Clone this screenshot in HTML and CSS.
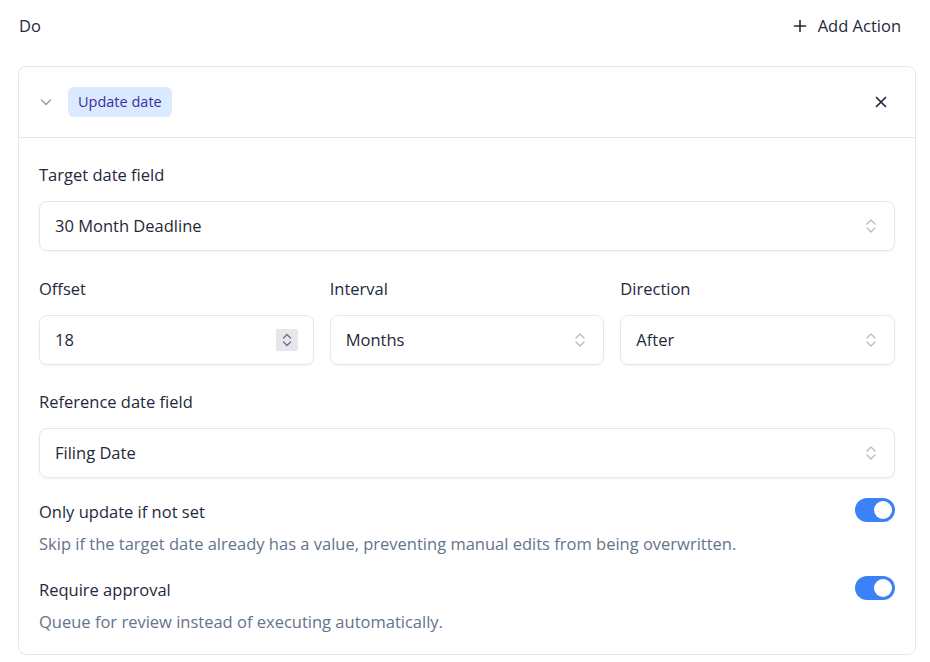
FILE: index.html
```html
<!DOCTYPE html>
<html lang="en">

<head>
    <meta charset="UTF-8">
    <meta name="viewport" content="width=device-width, initial-scale=1.0">
    <title>Actions</title>
    <link rel="stylesheet" href="styles.css">
</head>

<body>
    <div class="section-head">
        <span class="section-title">Do</span>
        <button class="add-btn">
            <svg width="16" height="16" viewBox="0 0 16 16" fill="none" stroke="#1f2937" stroke-width="1.6" stroke-linecap="round">
                <path d="M8 2.5v11M2.5 8h11" />
            </svg>
            Add Action
        </button>
    </div>

    <div class="action-card">
        <div class="card-head">
            <svg class="chevron" width="16" height="16" viewBox="0 0 16 16" fill="none" stroke="#94a3b8" stroke-width="1.6" stroke-linecap="round" stroke-linejoin="round">
                <path d="M3.5 6l4.5 4.5L12.5 6" />
            </svg>
            <span class="badge">Update date</span>
            <button class="close-btn">
                <svg width="16" height="16" viewBox="0 0 16 16" fill="none" stroke="#1e293b" stroke-width="1.7" stroke-linecap="round">
                    <path d="M3.5 3.5l9 9M12.5 3.5l-9 9" />
                </svg>
            </button>
        </div>

        <div class="card-body">
            <div class="field">
                <label>Target date field</label>
                <div class="select">
                    <span>30 Month Deadline</span>
                    <svg class="updown" width="16" height="20" viewBox="0 0 16 20" fill="none" stroke="#b6bcc6" stroke-width="1.3" stroke-linecap="round" stroke-linejoin="round">
                        <path d="M4 8l4-4 4 4M4 12l4 4 4-4" />
                    </svg>
                </div>
            </div>

            <div class="field-row">
                <div class="field">
                    <label>Offset</label>
                    <div class="select">
                        <span>18</span>
                        <span class="spinner">
                            <svg width="12" height="18" viewBox="0 0 12 18" fill="none" stroke="#6b7280" stroke-width="1.3" stroke-linecap="round" stroke-linejoin="round">
                                <path d="M2.5 7l3.5-3.5L9.5 7M2.5 11l3.5 3.5 3.5-3.5" />
                            </svg>
                        </span>
                    </div>
                </div>
                <div class="field">
                    <label>Interval</label>
                    <div class="select">
                        <span>Months</span>
                        <svg class="updown" width="16" height="20" viewBox="0 0 16 20" fill="none" stroke="#b6bcc6" stroke-width="1.3" stroke-linecap="round" stroke-linejoin="round">
                            <path d="M4 8l4-4 4 4M4 12l4 4 4-4" />
                        </svg>
                    </div>
                </div>
                <div class="field">
                    <label>Direction</label>
                    <div class="select">
                        <span>After</span>
                        <svg class="updown" width="16" height="20" viewBox="0 0 16 20" fill="none" stroke="#b6bcc6" stroke-width="1.3" stroke-linecap="round" stroke-linejoin="round">
                            <path d="M4 8l4-4 4 4M4 12l4 4 4-4" />
                        </svg>
                    </div>
                </div>
            </div>

            <div class="field">
                <label>Reference date field</label>
                <div class="select">
                    <span>Filing Date</span>
                    <svg class="updown" width="16" height="20" viewBox="0 0 16 20" fill="none" stroke="#b6bcc6" stroke-width="1.3" stroke-linecap="round" stroke-linejoin="round">
                        <path d="M4 8l4-4 4 4M4 12l4 4 4-4" />
                    </svg>
                </div>
            </div>

            <div class="option first">
                <div class="option-text">
                    <div class="option-title">Only update if not set</div>
                    <div class="option-desc">Skip if the target date already has a value, preventing manual edits from being overwritten.</div>
                </div>
                <span class="toggle on"></span>
            </div>

            <div class="option">
                <div class="option-text">
                    <div class="option-title">Require approval</div>
                    <div class="option-desc">Queue for review instead of executing automatically.</div>
                </div>
                <span class="toggle on"></span>
            </div>
        </div>
    </div>
</body>

</html>
```

FILE: styles.css
```css
* {
    margin: 0;
    padding: 0;
    box-sizing: border-box;
}

body {
    font-family: 'Open Sans', 'Noto Sans', sans-serif;
    font-size: 16.5px;
    line-height: 24px;
    color: #1e293b;
    background: #ffffff;
    padding: 14px 14px 0 18px;
}

button {
    font: inherit;
    color: inherit;
    background: none;
    border: none;
    cursor: pointer;
}

/* Section header */
.section-head {
    display: flex;
    justify-content: space-between;
    align-items: center;
    height: 24px;
    margin-bottom: 28px;
}

.section-title {
    padding-left: 1px;
}

.add-btn {
    display: flex;
    align-items: center;
    gap: 10px;
    padding-right: 15px;
}

/* Card */
.action-card {
    width: 898px;
    border: 1px solid #e2e8f0;
    border-radius: 8px;
}

.card-head {
    display: flex;
    align-items: center;
    height: 71px;
    padding: 0 26px 0 19px;
    border-bottom: 1px solid #e2e8f0;
}

.chevron {
    margin-right: 14px;
}

.badge {
    background: #dbeafe;
    color: #3730a3;
    font-size: 14.5px;
    line-height: 20px;
    padding: 5px 10px;
    border-radius: 6px;
}

.close-btn {
    margin-left: auto;
    display: flex;
}

.card-body {
    padding: 25px 20px 20px 20px;
}

.field {
    display: flex;
    flex-direction: column;
    gap: 14px;
    margin-bottom: 26px;
}

.field-row {
    display: grid;
    grid-template-columns: repeat(3, 1fr);
    gap: 16px;
}

.field-row .field {
    margin-bottom: 25px;
}

.field label {
    line-height: 24px;
}

.select {
    height: 50px;
    display: flex;
    align-items: center;
    justify-content: space-between;
    padding: 0 15px 0 15px;
    border: 1px solid #e2e8f0;
    border-radius: 8px;
    box-shadow: 0 1px 2px rgba(15, 23, 42, 0.05);
    color: #1f2937;
}

.spinner {
    width: 22px;
    height: 22px;
    background: #e5e7eb;
    border-radius: 2px;
    display: flex;
    align-items: center;
    justify-content: center;
}

/* Toggle options */
.option {
    display: flex;
    justify-content: space-between;
    align-items: flex-start;
    margin-top: 22px;
}

.option.first {
    margin-top: -4px;
}

.option-desc {
    color: #64748b;
    margin-top: 8px;
}

.toggle {
    width: 40px;
    height: 24px;
    border-radius: 12px;
    background: #d1d5db;
    position: relative;
    flex-shrink: 0;
    margin-top: -2px;
}

.toggle.on {
    background: #3b82f6;
}

.toggle::before {
    content: '';
    position: absolute;
    top: 3px;
    left: 3px;
    width: 18px;
    height: 18px;
    border-radius: 50%;
    background: #ffffff;
}

.toggle.on::before {
    left: 19px;
}
```
